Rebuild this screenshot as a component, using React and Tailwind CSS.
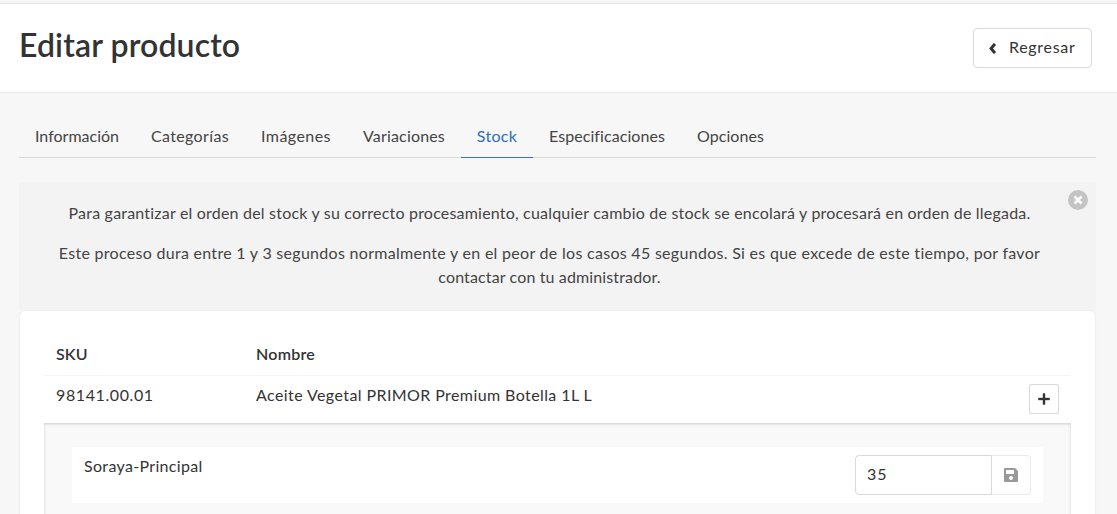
const tabs = [
  { label: "Información", cls: "w-[116px]" },
  { label: "Categorías", cls: "w-[110px] tracking-[0.35px]" },
  { label: "Imágenes", cls: "w-[102px] tracking-[0.45px]" },
  { label: "Variaciones", cls: "w-[114px] tracking-[0.17px]" },
  { label: "Stock", cls: "w-[72px] tracking-[0.3px]", active: true },
  { label: "Especificaciones", cls: "w-[148px] tracking-[0.07px]" },
  { label: "Opciones", cls: "w-[99px] tracking-[0.05px]" },
];

function ChevronLeft() {
  return (
    <svg width="7" height="11" viewBox="0 0 7 11" fill="none" stroke="currentColor" strokeWidth="3">
      <path d="M6 .9 2.1 5.5 6 10.1" />
    </svg>
  );
}

function Plus() {
  return (
    <svg width="12" height="12" viewBox="0 0 12 12" fill="currentColor">
      <path d="M5 .5h2V5h4.5v2H7v4.5H5V7H.5V5H5z" stroke="currentColor" strokeWidth=".4" />
    </svg>
  );
}

function Save() {
  return (
    <svg width="14" height="14" viewBox="0 0 14 14" fill="#999999" fillRule="evenodd">
      <path d="M1 0h10l3 3v10a1 1 0 0 1-1 1H1a1 1 0 0 1-1-1V1a1 1 0 0 1 1-1ZM2 2v4h8V2ZM7 8a2 2 0 1 0 0 4 2 2 0 0 0 0-4Z" />
    </svg>
  );
}

function Close() {
  return (
    <svg width="20" height="20" viewBox="0 0 20 20">
      <circle cx="10" cy="10" r="10" fill="#c4c4c4" />
      <path d="m6.5 6.5 7 7m0-7-7 7" stroke="#fff" strokeWidth="2.6" />
    </svg>
  );
}

function Header() {
  return (
    <header className="flex h-[90px] items-start justify-between border-y border-t-[#e3e3e3] border-b-[#ebebeb] bg-white pr-[25px] pl-[19px]">
      <h1 className="mt-[21px] text-[32px] leading-[40px] font-semibold tracking-[0.12px] text-[#333333]">Editar producto</h1>
      <button className="mt-6 flex h-[40px] w-[119px] items-center rounded border border-[#d9d9d9] bg-white pl-[15px] text-[#333333]">
        <ChevronLeft />
        <span className="ml-[13px] pb-0.5 tracking-[0.7px]">Regresar</span>
      </button>
    </header>
  );
}

export default function App() {
  return (
    <div className="h-[514px] overflow-hidden bg-[#f7f7f7] pt-[3px] font-['Lato',sans-serif] text-base leading-6 text-[#333333]">
      <Header />
      <main className="pr-[21px] pl-[19px]">
        <nav className="mt-[23px] flex h-[42px] border-b border-[#d9d9d9]">
          {tabs.map((t) => (
            <a
              key={t.label}
              className={`-mb-px h-[42px] border-b pt-2 text-center ${t.cls} ${
                t.active ? "border-b-[#3f70b5] text-[#2f6db8]" : "border-b-transparent text-[#444444]"
              }`}
            >
              {t.label}
            </a>
          ))}
        </nav>
        <section className="relative mt-6 h-[128px] bg-[#f3f3f3] pt-[19px] pr-4 text-center whitespace-nowrap text-[#444444]">
          <p className="tracking-[0.2px]">
            Para garantizar el orden del stock y su correcto procesamiento, cualquier cambio de stock se encolará y procesará en orden de llegada.
          </p>
          <p className="mt-4">
            <span className="tracking-[0.29px]">
              Este proceso dura entre 1 y 3 segundos normalmente y en el peor de los casos 45 segundos. Si es que excede de este tiempo, por favor
            </span>
            <br />
            <span className="tracking-[0.13px]">contactar con tu administrador.</span>
          </p>
          <button className="absolute top-2 right-2">
            <Close />
          </button>
        </section>
        <section className="mx-px mt-px h-[220px] rounded-t-[5px] bg-white px-6 shadow-[0_0_2px_rgba(0,0,0,0.12)]">
          <div className="flex h-[65px] border-b border-[#f5f5f5] pt-[31px] pl-3 font-semibold">
            <div className="w-[200px] tracking-[0.1px]">SKU</div>
            <div className="tracking-[0.25px]">Nombre</div>
          </div>
          <div className="flex h-[47px] pt-[7px] pr-3 pl-3">
            <div className="w-[200px] tracking-[0.6px]">98141.00.01</div>
            <div className="grow tracking-[0.41px]">Aceite Vegetal PRIMOR Premium Botella 1L L</div>
            <button className="mt-px flex h-[30px] w-[30px] items-center justify-center rounded-[2px] border border-[#d9d9d9]">
              <Plus />
            </button>
          </div>
          <div className="h-[110px] bg-[#f9f9f9] px-7 pt-6 shadow-[inset_0_1px_3px_rgba(0,0,0,0.18)]">
            <div className="flex h-[56px] bg-white pt-2 pr-3 pl-3">
              <div className="-mt-px grow tracking-[0.33px]">Soraya-Principal</div>
              <div className="flex h-[40px] w-[176px]">
                <div className="w-[137px] rounded-l border border-[#d9d9d9] pt-[6px] pl-[11px] tracking-[0.9px]">35</div>
                <button className="flex grow items-center justify-center rounded-r border border-l-0 border-[#ebebeb]">
                  <Save />
                </button>
              </div>
            </div>
          </div>
        </section>
      </main>
    </div>
  );
}
